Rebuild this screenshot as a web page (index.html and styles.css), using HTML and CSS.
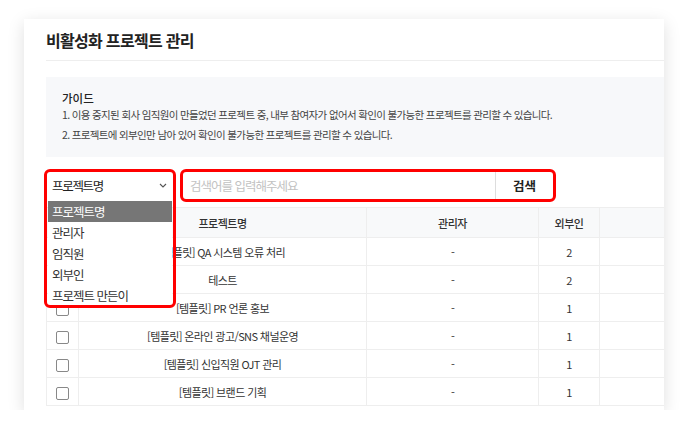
FILE: index.html
```html
<!DOCTYPE html>
<html lang="ko">
<head>
    <meta charset="UTF-8">
    <title>비활성화 프로젝트 관리</title>
    <link rel="stylesheet" href="styles.css">
</head>
<body>
    <div class="card">
        <h1 class="page-title">비활성화 프로젝트 관리</h1>

        <!-- 가이드 -->
        <div class="guide">
            <h2>가이드</h2>
            <p>1. 이용 중지된 회사 임직원이 만들었던 프로젝트 중, 내부 참여자가 없어서 확인이 불가능한 프로젝트를 관리할 수 있습니다.</p>
            <p>2. 프로젝트에 외부인만 남아 있어 확인이 불가능한 프로젝트를 관리할 수 있습니다.</p>
        </div>

        <!-- 검색 -->
        <div class="filter">
            <div class="select-wrap">
                <div class="select">
                    <span>프로젝트명</span>
                    <svg class="chevron" width="8" height="5" viewBox="0 0 8 5"><path d="M1 1l3 3 3-3" fill="none" stroke="#555" stroke-width="1.1"/></svg>
                </div>
                <ul class="options">
                    <li class="active">프로젝트명</li>
                    <li>관리자</li>
                    <li>임직원</li>
                    <li>외부인</li>
                    <li>프로젝트 만든이</li>
                </ul>
                <span class="mark mark-select"></span>
            </div>
            <div class="search">
                <input type="text" placeholder="검색어를 입력해주세요">
                <button>검색</button>
                <span class="mark mark-search"></span>
            </div>
        </div>

        <table class="list">
            <colgroup>
                <col style="width: 32px">
                <col style="width: 288px">
                <col style="width: 172px">
                <col style="width: 61px">
                <col>
            </colgroup>
            <thead>
                <tr>
                    <th></th>
                    <th>프로젝트명</th>
                    <th>관리자</th>
                    <th>외부인</th>
                    <th></th>
                </tr>
            </thead>
            <tbody>
                <tr><td><span class="check"></span></td><td>[템플릿] QA 시스템 오류 처리</td><td>-</td><td>2</td><td></td></tr>
                <tr><td><span class="check"></span></td><td>테스트</td><td>-</td><td>2</td><td></td></tr>
                <tr><td><span class="check"></span></td><td>[템플릿] PR 언론 홍보</td><td>-</td><td>1</td><td></td></tr>
                <tr><td><span class="check"></span></td><td>[템플릿] 온라인 광고/SNS 채널운영</td><td>-</td><td>1</td><td></td></tr>
                <tr><td><span class="check"></span></td><td>[템플릿] 신입직원 OJT 관리</td><td>-</td><td>1</td><td></td></tr>
                <tr><td><span class="check"></span></td><td>[템플릿] 브랜드 기획</td><td>-</td><td>1</td><td></td></tr>
            </tbody>
        </table>
    </div>
</body>
</html>
```

FILE: styles.css
```css
body {
    margin: 0;
    background: #fff;
    font-family: "Noto Sans CJK KR", "Noto Sans", sans-serif;
    color: #333;
}
.card {
    margin: 19px 0 0 24px;
    width: 640px;
    height: 391px;
    padding-left: 22px;
    box-sizing: border-box;
    background: #fff;
    overflow: hidden;
    box-shadow: 0 4px 16px rgba(0,0,0,0.13);
}
.page-title {
    margin: 0;
    padding: 11px 0 10px;
    font-size: 16px;
    line-height: 20px;
    font-weight: bold;
    letter-spacing: -0.7px;
    color: #222;
    border-bottom: 1px solid #eee;
}
.guide {
    margin-top: 16px;
    height: 80px;
    box-sizing: border-box;
    padding: 12px 16px 0;
    background: #f7f8fa;
}
.guide h2 {
    margin: 0;
    font-size: 11.5px;
    line-height: 18px;
    font-weight: 500;
    color: #222;
}
.guide p {
    margin: 0 0 4px;
    font-size: 10.5px;
    line-height: 16px;
    letter-spacing: -0.65px;
    color: #444;
}
.filter {
    display: flex;
    margin-top: 13px;
    height: 31px;
}
.select-wrap {
    position: relative;
    width: 124px;
    margin-left: 2px;
}
.select {
    display: flex;
    align-items: center;
    justify-content: space-between;
    height: 31px;
    padding: 0 5px 0 4px;
    font-size: 12.5px;
    letter-spacing: -1.3px;
    color: #222;
}
.options {
    position: absolute;
    top: 31px;
    left: 0;
    width: 124px;
    margin: 0;
    padding: 0;
    list-style: none;
    background: #fff;
    z-index: 2;
}
.options li {
    height: 21px;
    line-height: 21px;
    padding-left: 4px;
    font-size: 12.5px;
    letter-spacing: -1px;
    color: #333;
}
.options li.active {
    background: #767676;
    color: #fff;
}
.search {
    position: relative;
    display: flex;
    margin-left: 12px;
    width: 369px;
}
.search input {
    flex: 1;
    border: none;
    outline: none;
    padding: 0 6px;
    font-family: inherit;
    font-size: 12.5px;
    letter-spacing: -1px;
    background: #fff;
}
.search input::placeholder {
    color: #c2c2c2;
}
.search button {
    width: 58px;
    border: none;
    border-left: 1px solid #ddd;
    background: #fff;
    font-family: inherit;
    font-size: 12.5px;
    font-weight: bold;
    color: #222;
    padding: 0;
}
.mark {
    position: absolute;
    border: 3px solid #f00;
    border-radius: 6px;
    box-sizing: border-box;
    z-index: 3;
    pointer-events: none;
}
.mark-select {
    left: -4px;
    top: -1px;
    width: 132px;
    height: 139px;
}
.mark-search {
    left: -4px;
    top: -1px;
    width: 376px;
    height: 33px;
}
.list {
    margin-top: 6px;
    width: 640px;
    border-collapse: collapse;
    table-layout: fixed;
}
.list th, .list td {
    border: 1px solid #eee;
    text-align: center;
    padding: 0;
    font-size: 11px;
    color: #333;
}
.list th {
    height: 29px;
    background: #f8f9fa;
    font-weight: 500;
    letter-spacing: -0.5px;
}
.list td {
    height: 27px;
    letter-spacing: -0.6px;
}
.check {
    display: inline-block;
    width: 13px;
    height: 13px;
    box-sizing: border-box;
    border: 1px solid #888;
    border-radius: 2px;
    vertical-align: middle;
}
```
